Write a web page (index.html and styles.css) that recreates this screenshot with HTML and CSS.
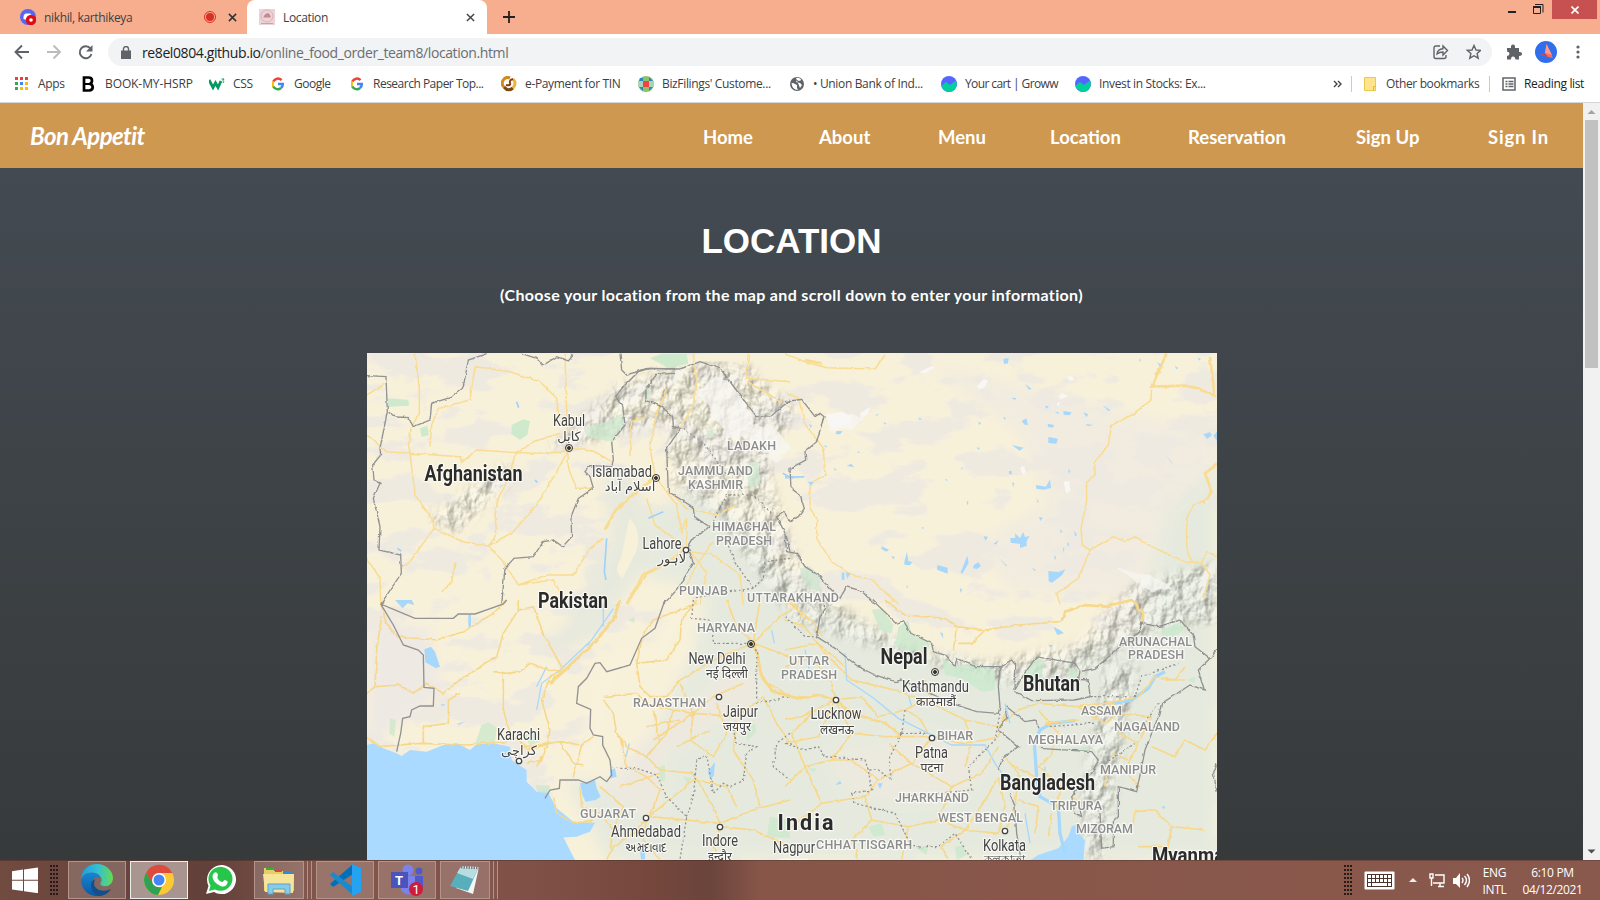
FILE: index.html
```html
<!DOCTYPE html>
<html lang="en">
<head>
<meta charset="utf-8">
<title>Location</title>
<link rel="stylesheet" href="styles.css">
</head>
<body>
<div class="screen">
  <header class="tabs">
    <div class="tab idle">
      <svg class="i16" viewBox="0 0 16 16"><circle cx="8" cy="8" r="8" fill="#5865f2"/><path d="M3.5 10Q3 5 6 4.500h4q2 1 2.500 4l-4 3z" fill="#fff"/><circle cx="11" cy="11" r="5.200" fill="#e00b13"/><circle cx="11" cy="11" r="1.800" fill="#fff"/></svg>
      <span class="tab-title t-one">nikhil, karthikeya</span>
      <svg class="rec" viewBox="0 0 12 12"><circle cx="6" cy="6" r="5.500" fill="none" stroke="#d93025"/><circle cx="6" cy="6" r="4" fill="#d93025"/></svg>
      <svg class="x" viewBox="0 0 10 10"><path d="M1 1l8 8M9 1L1 9" stroke="#333" stroke-width="1.700"/></svg>
    </div>
    <div class="tab active">
      <svg class="i16" viewBox="0 0 16 16"><path fill="#ecd3d6" d="M0 0h16v16H0z"/><circle cx="8" cy="7" r="6" fill="none" stroke="#dcb3b8"/><path d="M4.500 8.500q0-3 4.500-4.500 3 2 2.500 4.500z" fill="#c58a91"/><path d="M2 14.500h12" stroke="#cfa0a6"/></svg>
      <span class="tab-title t-two">Location</span>
      <svg class="x" viewBox="0 0 10 10"><path d="M1 1l8 8M9 1L1 9" stroke="#444" stroke-width="1.600"/></svg>
    </div>
    <svg class="plus" viewBox="0 0 12 12"><path d="M6 0v12M0 6h12" stroke="#222" stroke-width="1.800"/></svg>
    <div class="window">
      <svg viewBox="0 0 36 14"><path d="M0 11h8v2H0z" fill="#222"/><path d="M25.500 6.500h7v7h-7zM27 4.500h8v8" fill="none" stroke="#222"/><path d="M25 6h8v2h-8z" fill="#222"/></svg>
      <div class="close"><svg viewBox="0 0 8 8"><path d="M.5.5l7 7M7.500.5l-7 7" stroke="#fff" stroke-width="1.600"/></svg></div>
    </div>
  </header>
  <div class="toolbar">
    <svg class="arrows" viewBox="0 0 80 16"><g fill="none" stroke-width="1.900"><path d="M15 8H2M8 1.500L1.500 8 8 14.500" stroke="#5f6368"/><path d="M33 8h13M39.500 1.500L46 8l-6.500 6.500" stroke="#bbb"/><path d="M76.500 4.500A6 6 0 1 0 77.500 10" stroke="#5f6368"/></g><path d="M78.500 1v6.500H72z" fill="#5f6368"/></svg>
    <div class="omnibox">
      <svg class="lock" viewBox="0 0 10 13"><path d="M0 4.500h10V13H0z" fill="#5f6368"/><path d="M2.500 5V3a2.500 2.500 0 0 1 5 0v2" fill="none" stroke="#5f6368" stroke-width="1.400"/></svg>
      <span class="url"><b>re8el0804.github.io</b>/online_food_order_team8/location.html</span>
      <svg class="share" viewBox="0 0 48 16"><g fill="none" stroke="#5f6368" stroke-width="1.400"><path d="M7 2H3Q1 2 1 4v8.500q0 2 2 2h8q2 0 2-2V11M4 10q.5-5 6-5.300V2l4.500 4.500L10 11V8Q6.500 8 4 10z"/><path d="M41 1.500l2 4.500 4.700.4-3.600 3.100 1.100 4.700L41 11.700l-4.200 2.500 1.100-4.700-3.600-3.100L39 6z"/></g></svg>
    </div>
    <svg class="puzzle" viewBox="0 0 16 16"><path d="M1 4h4Q4.500.5 7 .5T9 4h4v4q3-.5 3 1.700T13 12v3.500H9.500Q9 12.500 7 12.500T5 15.500H1V12q2.500-.5 2.500-2.300T1 7.500z" fill="#5f6368"/></svg>
    <svg class="avatar" viewBox="0 0 22 22"><circle cx="11" cy="11" r="11" fill="#2f6fed"/><path d="M11.500 3L18 17l-5-1-8-3 5-1z" fill="#ff6b5e"/><path d="M11.500 3L10 12l7 2z" fill="#ff9a8d"/><path d="M4 12l6 .5 3 3.500z" fill="#b53a55"/></svg>
    <svg class="dots" viewBox="0 0 4 14"><g fill="#5f6368"><circle cx="2" cy="2" r="1.600"/><circle cx="2" cy="7" r="1.600"/><circle cx="2" cy="12" r="1.600"/></g></svg>
  </div>
  <div class="bookmarks">
    <div class="bm"><svg viewBox="0 0 16 16"><path fill="#ea4335" d="M1 1h3v3H1zM6 1h3v3H6zM11 1h3v3h-3z"/><path fill="#34a853" d="M1 6h3v3H1zM1 11h3v3H1z"/><path fill="#4285f4" d="M6 6h3v3H6z"/><path fill="#fbbc05" d="M11 6h3v3h-3zM6 11h3v3H6zM11 11h3v3h-3z"/></svg><span>Apps</span></div>
    <div class="bm"><svg viewBox="0 0 16 16"><path d="M3 1.500h4.500q3.500 0 3.500 3T8.500 8q3.200.3 3.200 3.300t-3.700 3.200H3z" fill="none" stroke="#000" stroke-width="2.700"/><path d="M3 8h6" stroke="#000" stroke-width="2"/></svg><span class="s-book">BOOK-MY-HSRP</span></div>
    <div class="bm"><svg viewBox="0 0 16 16"><path d="M0 4l4 7.500L6.500 7 9 11.500 12 5" fill="none" stroke="#059862" stroke-width="2.800"/><path d="M12.500 3H15l-1 1.500q1.500.5 0 2.500" fill="none" stroke="#059862"/></svg><span>CSS</span></div>
    <div class="bm g"><svg viewBox="2 0 16 16"><g fill="none" stroke-width="2.500"><path d="M11.500 4.200A5 5 0 0 0 3.300 5.500" stroke="#ea4335"/><path d="M3.300 5.500a5 5 0 0 0 0 5" stroke="#fbbc05"/><path d="M3.300 10.500a5 5 0 0 0 7.700 1.500" stroke="#34a853"/><path d="M11 12a5 5 0 0 0 1.800-4H8" stroke="#4285f4"/></g></svg><span>Google</span></div>
    <div class="bm g"><svg viewBox="2 0 16 16"><g fill="none" stroke-width="2.500"><path d="M11.500 4.200A5 5 0 0 0 3.300 5.500" stroke="#ea4335"/><path d="M3.300 5.500a5 5 0 0 0 0 5" stroke="#fbbc05"/><path d="M3.300 10.500a5 5 0 0 0 7.700 1.500" stroke="#34a853"/><path d="M11 12a5 5 0 0 0 1.800-4H8" stroke="#4285f4"/></g></svg><span>Research Paper Top...</span></div>
    <div class="bm"><svg viewBox="0 0 16 16"><g fill="none" stroke-width="3"><path d="M9 2A5.500 5.500 0 0 0 3 11" stroke="#d08a1e"/><path d="M3 11q4 5 9 1" stroke="#7a4a12"/><path d="M12 12q4-5 0-9" stroke="#e8b73c"/><path d="M12 3Q8 4 9 7T5 9" stroke="#8a3d14" stroke-width="2"/></g></svg><span>e-Payment for TIN</span></div>
    <div class="bm"><svg viewBox="0 0 16 16"><circle cx="8" cy="8" r="8" fill="#8dc26b"/><path d="M0 5h5v6H0zM11 5h5v6h-5z" fill="#a6d5b8"/><path d="M2 2h3v3H1zM11 1l4 4h-4zM11 11h4l-4 4zM1 11h4v4z" fill="#2c85c4"/><path d="M5 5h6v6H5z" fill="#ee4444"/></svg><span>BizFilings' Custome...</span></div>
    <div class="bm"><svg viewBox="-1 0 16 16"><circle cx="7" cy="8" r="7" fill="#5f6368"/><path d="M1.500 7q3 0 3.500 1l2 1v3l1 2q-6 0-6.500-7zM6 2q3-1 5.500 2L9 5 7 4 6 6l4 1 2 2-2 3" fill="#fff"/></svg><span>• Union Bank of Ind...</span></div>
    <div class="bm cart"><svg viewBox="0 0 16 16"><circle cx="8" cy="8" r="8" fill="#5367ff"/><path d="M.3 10L5 6l4 3 6-4.500Q17.500 12 11 15.500 3 17 .3 10z" fill="#00d09c"/></svg><span>Your cart | Groww</span></div>
    <div class="bm"><svg viewBox="0 0 16 16"><circle cx="8" cy="8" r="8" fill="#5367ff"/><path d="M.3 10L5 6l4 3 6-4.500Q17.500 12 11 15.500 3 17 .3 10z" fill="#00d09c"/></svg><span>Invest in Stocks: Ex...</span></div>
    <svg class="more" viewBox="0 0 9 8"><path d="M1 1l3 3-3 3M5 1l3 3-3 3" fill="none" stroke="#444" stroke-width="1.400"/></svg>
    <div class="bm split"><svg viewBox="0 0 16 16"><path d="M.5 1.500h11v13H.5z" fill="#ffe38f" stroke="#ecc94b"/><path d="M9.500 14v-3.500h2" fill="none" stroke="#e0b72e"/></svg><span>Other bookmarks</span></div>
    <div class="bm split"><svg viewBox="0 0 16 16"><path d="M1 2h12v12H1z" fill="none" stroke="#5f6368" stroke-width="1.500"/><path d="M3.500 5.500h2m1 0h5M3.500 8h2m1 0h5M3.500 10.500h2m1 0h5" stroke="#5f6368" stroke-width="1.500"/></svg><span class="dark">Reading list</span></div>
  </div>

  <div class="viewport">
    <main class="page">
      <nav class="nav">
        <a class="brand">Bon Appetit</a>
        <a>Home</a><a>About</a><a>Menu</a><a>Location</a><a>Reservation</a><a>Sign Up</a><a class="last">Sign In</a>
      </nav>
      <h1>LOCATION</h1>
      <p class="hint">(Choose your location from the map and scroll down to enter your information)</p>
      <svg class="map" viewBox="0 0 850 507">
        <defs>
          <filter id="patch" x="0" y="0" width="1" height="1" color-interpolation-filters="sRGB"><feTurbulence type="fractalNoise" baseFrequency=".016 .032" numOctaves="5" seed="8"/><feColorMatrix values="0 0 0 0 .933 0 0 0 0 .914 0 0 0 0 .886 12 0 0 0 -6.100"/></filter>
          <filter id="relief" x="0" y="0" width="1" height="1" color-interpolation-filters="sRGB"><feTurbulence type="fractalNoise" baseFrequency=".07 .05" numOctaves="4" seed="3" result="n"/><feDiffuseLighting in="n" surfaceScale="6" lighting-color="#fff" result="l"><feDistantLight azimuth="225" elevation="52"/></feDiffuseLighting><feColorMatrix in="l" values="1 0 0 0 .06 0 1 0 0 .06 0 0 1 0 .03 0 0 0 1 0" result="c"/><feGaussianBlur in="SourceGraphic" stdDeviation="5" result="m"/><feComposite in="c" in2="m" operator="in"/></filter>
          <filter id="jag" color-interpolation-filters="sRGB"><feTurbulence type="fractalNoise" baseFrequency=".05" numOctaves="3" seed="2"/><feDisplacementMap in="SourceGraphic" scale="9" xChannelSelector="R" yChannelSelector="G"/></filter>
          <filter id="soft"><feGaussianBlur stdDeviation="7"/></filter>
        </defs>
        <path fill="#f8f1da" d="M0 0h850v507H0z"/>
        <path filter="url(#patch)" opacity=".85" d="M0 0h850v507H0z"/>
        <g filter="url(#soft)">
          <path d="M560 10L760 60 850 80V260L640 235 610 190 680 150 650 80z" fill="#eee9e1" opacity=".7"/>
          <path d="M225 210L300 150 330 130 400 200 440 245 560 300 660 320 770 270 800 160 850 110V507H240L200 430 250 400 330 300 310 230z" fill="#e6eade"/>
          <path d="M170 300L220 290 290 200 270 120 235 120 245 190 200 270z" fill="#e7e9dd"/>
          <path d="M0 270L60 275 75 340 0 395z" fill="#eee9e3"/>
          <path d="M220 350L300 370 370 310 400 340 300 400 290 470 240 440z" fill="#eee9df"/>
          <path d="M560 380L620 400 600 440 540 450 480 440 460 400z" fill="#eeeae0" opacity=".7"/>
          <path d="M235 300L280 300 310 230 340 250 320 310 290 370 240 430 205 425z" fill="#f8f1da"/>
        </g>
        <g filter="url(#relief)" opacity=".42">
          <path d="M180 95L255 30 330 8 380 12 430 60 400 100 410 150 440 230 500 270 560 300 620 310 710 290 770 230 850 210V270L790 275 720 320 640 330 530 300 430 270 390 220 350 160 305 130 300 70 240 85z"/>
          <path d="M740 310L715 440 720 507 735 507 770 310zM60 165L140 110 150 120 90 180z"/>
        </g>
        <g fill="#f7f6f2" opacity=".75" filter="url(#jag)"><path d="M330 40l20-18 25 20 10 30 25 5 15 20-20 8-30-25-15 5zM460 60l35 4-8 12-25 2zM385 100l30 4-4 8zM750 215l35 8 20 12-20 5z"/></g>

        <g transform="translate(-7 -8) scale(.33333)">
          <g fill="#cfe9cd"><path d="M80 160l65 4 2 18-62 3zM180 250l22-8 5 28-22 6zM455 240l35-17 20 5-8 42-22 14-26-16zM870 40l35-14h75l5 30-60 12z"/><path d="M680 245l60-15 45-25 10 35-40 50-75-15zM860 130l12-5-2 45-12-3zM1040 258l18-5 4 20-18 6zM1170 350l25 5 5 60-30 20-10-50z" opacity=".75"/></g>
          <g fill="none" stroke="#f9dc92" stroke-width="4.500" filter="url(#jag)">
            <path d="M165 26L178 130 178 205 155 245 145 300 150 325 300 335 305 352 350 315 450 322 530 325 600 322 628 310 700 318 755 350M150 325L165 450 215 520 222 550 310 590 385 603 410 570 405 510 415 460 445 400 465 330 520 290 600 265M210 305L215 240 235 190 330 165 345 65 450 80 540 110 590 160 598 220M222 550L150 650 122 672M385 603L460 560 530 480 590 380 628 310M385 603L430 650 475 720 560 690 640 690 690 610 730 580M20 150L78 115M20 270L80 320 150 325M615 26L625 370 650 430 700 430M285 655L275 710 245 740M475 720L580 705 620 778M20 640L60 700 62 778M890 400L830 440 770 490 735 550 770 490M860 460L885 540 940 580 975 615M890 400L950 480 965 560 980 520V610M975 615L860 690 810 760M885 390L870 310 890 200 920 130M810 330L815 230 860 215M1000 26L1010 100 1000 180 960 250M1165 26L1160 100 1290 110M1290 190L1230 150 1160 110M990 620L1060 630 1140 690 1150 778M990 620L1040 680 1020 778M1060 590L1010 660 980 720M940 450L980 490 1070 510 1130 480"/>
            <path d="M885 395L770 490 735 555M975 615L930 650 850 690 800 778" stroke-width="9"/>
          </g>
          <g fill="none" stroke="#9fd2f8" stroke-width="5"><path d="M740 580L733 680 738 705M910 500l-45 20M470 170l6 18M525 405l7 7M1268 385l22 12M112 610l12 8"/></g>
          <path d="M808 520q40 40 20 100l-40 80q-30-20-5-60z" fill="#f8f1da"/>
          <g fill="none" stroke="#929292" stroke-width="4" filter="url(#jag)">
            <path d="M20 92L78 95 82 200 60 310 62 330 38 360 42 405 60 415 40 460 60 545 57 615 122 630 124 685 62 778M86 202L108 216 145 218 160 245 210 225 215 175 270 158 310 125 325 45 380 26M485 26L530 40 548 62 590 35 625 48 640 30M945 72L870 70 835 80 790 125 766 155 788 180 795 240 755 290 760 345 755 365 690 362 675 380 690 395 700 430 655 460 633 515 635 575 608 605 580 585 550 590 520 635 462 640 435 670 425 778"/>
            <path d="M945 85L890 88 858 130 858 165 905 185 938 215 940 245 962 250 920 310 925 440 1000 487 1003 515 1048 545 1000 580 985 605 1000 655 950 735 910 778M780 26L785 75 800 90 860 70 960 72 1020 50 1080 70 1140 150 1190 215 1235 212 1290 165M1275 500L1250 515 1278 570 1290 620"/>
            <path stroke-dasharray="6 7" d="M970 250L1035 300 1065 340 1100 390M1080 490L1100 450 1180 450 1240 510M1100 590L1130 660 1180 730 1210 700 1215 650 1290 640M1180 730L1110 740 1000 760M1080 490L1060 530"/>
          </g>
        </g>

        <g transform="translate(418 -8) scale(.33333)">
          <g fill="none" stroke="#f9dc92" stroke-width="4.500" filter="url(#jag)"><path d="M0 26L60 50 125 68 270 72 300 30M0 140L40 160 62 240 115 310 120 390 75 415 75 490 95 520 95 580 140 650 200 690 260 705 340 778M1145 26L1100 120 1098 165 1040 210 980 240 970 300 930 350 930 390 905 410 905 470 888 550 892 600 915 615 880 700 815 745 825 778M915 615L985 575 1020 590 1050 575 1100 605 1200 650 1250 655 1275 690 1255 760M1225 480L1205 520 1205 600 1220 655M1225 480L1260 465M1250 655L1265 620 1296 635"/><path d="M1145 26L1100 125 1200 122 1240 130 1296 158M1275 35L1290 158M1296 358L1260 385 1280 440 1255 475M60 45L110 55" stroke-width="8"/></g>
          <g fill="#a7d8fc"><path d="M655 42l16-3-2 16-12 2zM720 116l20 16-8 2zM678 158l16 1-4 6zM710 228l14-8 5 20-10-1zM788 236l20 4-5 8-14-2zM835 198l25 4-6 9-18-2zM895 202l15 6-6 9zM952 180l24 15-5 4zM902 238l23 1-16 5zM790 276l29 5-5 15-24-2zM680 300l36 8-12 9zM155 258l18 1-8 9-13-1zM185 362l14-6 8 11zM68 410l18 2-7 10zM753 420l30 5 12-22 3 26-22 5-22-3zM672 378h8v10h-8zM682 412l6 2-4 14zM545 468l6 2-4 12zM762 516l12 2-8 10zM1255 268l20-6 6 8-14 12zM1285 272l11-12v28zM690 565l15 14 10-18 5 15 14-3-9 15v15l-20 6v-12l-28-4-1-14h15zM595 574l14 1-7 12zM625 598l15-14-5 14zM290 604l22 10-8 6-15-8zM318 632l12 5-5 6zM358 650l8-30 4 28 13 3-9 10-16-2zM457 660l31 8v18l-32-12zM527 682l20-50 4 22-20 34zM566 660l14-8 8 11-12 9-12-2zM643 640l25 24-6-2zM790 678l30 3 21-8-10 18-30 22-10-4zM170 683l8-1 1 22h-9zM182 683l14 2-9 17zM524 728l8 6-5 10zM365 718v10h5zM847 590l6 8-5 8zM835 605l-2 20 5-12zM808 630l6 8-5 8zM868 557l8 12-6 6zM755 460l6 10-3 5zM72 236l9 6-4 8zM0 393l60 0-3 5-57 3zM115 302h10v6zM296 232l8 3-6 4zM580 230l9 4-7 6zM655 216l8 3-5 5zM780 182l12 2-8 7zM810 200l12 2-3 5zM575 307l10 2-5 5zM850 372l6 6-5 8zM1140 325l25 35-8-8zM1115 50l14 10-4 5zM1170 63l10 6-7 4zM1238 38l10 3-5 6zM1063 40l5 6-5 5zM740 668l14 7-6 2zM825 552l8 8-6 4zM400 218l10 3-5 5zM270 210l12-4-6 6zM145 368l10 6-5 3zM215 320l10 0-3 5zM410 545l8 4-6 3zM480 402l8 2-4 4zM530 366l4 5-5 3z"/></g>
          <g fill="#f8f7f5"><path d="M575 125l20-22 15 3-12 22-15 5zM400 82l40-18 10 3-30 18zM120 210l50-10 30 15-5 25-50 8zM225 205l30-18-8 22-18 9zM820 155l10-10 20 8-22 10zM845 95l15-2 8 12-14 3zM705 368l12-5 5 18-8 10zM835 410l18-2 3 30-12 8zM815 175l12-5-8 15z"/></g>
          <path d="M45 670l30-5 30 28-2 45-35-5-20-40z" fill="#cbe6cd" opacity=".7"/>
          <path d="M0 170L50 163 90 215 105 205 117 215 95 290 60 320 62 345 15 370 18 430 45 450 58 490 40 515 15 530 0 505M0 570L5 620 35 625 60 665 100 690 120 715 165 760 185 725 235 740 270 778" fill="none" stroke="#929292" stroke-width="4" filter="url(#jag)"/>
        </g>

        <g transform="translate(-7 247) scale(.33333)">
          <path d="M20 435L40 430 70 445 110 460 125 468 150 450 200 455 250 435 290 430 330 450 350 432 400 430 450 440 455 480 500 510 500 545 530 575 560 570 590 625 640 665 705 668 690 695 650 710 610 712 650 790H20z" fill="#aadaff"/>
          <g fill="#cfe9cd" opacity=".85"><path d="M365 375l20-8 25 15-5 45-60 5zM90 355l18 5-5 50-15-10zM527 555l45 2-10 22-30-3zM490 405l40-10 10 30-30 10zM900 500l15-5 0 45-18 10zM970 530l25 5-10 20zM1160 380l25-10 5 25-30 30zM1230 650l60 10v55l-70-5zM805 60l20-10-3 18z"/></g>
          <g fill="#a7d8fc"><path d="M193 148l20-8 12 15 15 45-12 5-32-18zM325 45h8v35h-8zM660 550l45-10 5 25 12 25-15 10-30 5-10-20zM750 510l15-5 5 25-18 5zM105 0l50 0 8 15-20-5-15 15zM1043 515l22-30-3 40-10 15zM670 140l22-18-5 14zM242 312l15 2-10 5zM290 372l28-8-20 10zM840 750l15-2v30h-12z"/></g>
          <g fill="none" stroke="#acd9f8" stroke-width="4"><path d="M760 26L695 120 600 210 545 250 530 330M730 10v70M808 430l-10 40M560 200l-30 60M1235 90l8 40"/></g>
          <g fill="none" stroke="#f7d88a" stroke-width="4.800" filter="url(#jag)"><path d="M62 12L80 70 110 110 230 120 310 95 400 40 440 0M65 50L50 150 45 260 20 280M45 260L120 255 160 280 200 250 250 280 300 240 410 170 430 100 475 30 475 0M400 215L440 220 480 215 510 190 550 205 610 215M430 215L430 330 450 400 500 440M475 30L520 20 550 100 610 210 570 230 545 300 570 390 562 440 530 500M20 410L60 440 180 430 320 435 440 425M190 430L190 380 265 370 265 300 300 280M500 440L600 425 665 435M600 425L640 490 670 495M500 440L440 460M500 490L545 480 560 440"/><path d="M730 300L760 340 770 400 800 440 860 470 900 510 1000 520M1010 0L965 60 960 120 920 180 830 190 850 100 880 60 1010 10M830 190L840 260 870 290 920 290 960 240 1080 170 1180 130M730 290L830 280 860 310 940 330 1000 340 1060 290 1150 250M940 330L920 400 860 470M960 250L1000 340 990 420 1060 470 1100 400 1070 310M880 420L1000 340 1130 350 1210 290M780 410L800 500 860 530 900 570 870 650 1080 670 1180 630 1290 600M780 560L900 520M660 560L665 620 720 640 760 690 750 750M580 590L590 640 640 670 700 660"/><path d="M860 655L940 590 1000 540 1100 560 1130 620M860 655L820 700 760 740 740 778M860 655L850 720 900 778M1080 680L1060 740 1080 778M1080 680L1180 690 1290 740M1130 360L1120 450 1180 540 1200 620M1180 130L1210 240 1290 290M1180 130L1130 80 1100 0M1180 130L1260 50 1290 30M1180 130L1290 170M1200 0L1180 130M1210 290L1250 370 1290 430M1000 520L1060 620 1080 670M860 380L960 360M900 430L880 330M950 440L1050 390M720 560L790 620 760 690M700 410L665 435 640 530"/><path d="M780 0L760 60 700 130 610 215 570 250M1185 130L1205 230 1240 275 1290 288M500 450L560 430" stroke-width="9"/></g>
          <g fill="none" stroke="#929292" stroke-width="4"><path d="M62 12L100 75 130 135 175 150 190 165 192 262 222 265 220 318 180 318 155 330 150 350 128 355 122 400 110 455M62 12L165 55 280 55 295 42 345 42 430 12 440 0M915 0L885 85 845 115 810 195 740 215 720 188 705 190 680 235 655 260 650 310 692 328 690 385 700 405 728 410 728 435 750 480 755 525 740 545 720 530 680 550 655 540 600 540 598 565 570 570 555 595"/><path stroke-dasharray="6 7" d="M755 505L830 505 890 525 920 590 980 650 960 778M980 650L1000 590 1010 480 1040 465 1060 580 1090 550 1110 560 1150 540 1160 460 1190 440 1130 430 1120 390M1060 80V130L1170 130 1190 150 1190 300M1290 400L1250 430 1240 500 1290 540M1000 0L995 55 1050 60M1190 310L1290 290" filter="url(#jag)"/></g>
        </g>

        <g transform="translate(418 247) scale(.33333)">
          <g fill="#cbe8cd" opacity=".8"><path d="M260 30l30-5 35 50-5 25-35-10zM340 80l30-18 10 40 60 30-15 15-60 10-35-20zM470 170l40 30 50-10 70 20v60l-40 5-60-40-50-10zM715 215l40-40 25 5-10 50-30 25zM850 200l30 15-5 25-20-5zM1130 90l55-25 12 25-30 20-30 5zM1205 240l25-10 0 20zM855 445l60-5-10 15zM510 740l25-5 10 30-30 15zM395 745l35-10-5 30zM250 680l40-10 10 35-35 5zM65 505l30 0-8 12z"/></g>
          <path d="M720 790L760 765 820 745 850 710 860 680 875 672 885 705 900 720 895 790z" fill="#aadaff"/>
          <g fill="none" stroke="#a7d8fc"><path d="M1140 215L1110 230 1090 265 1040 300 980 312M870 362L800 370 765 390 748 430 755 530 765 590 820 620 825 700 840 760" stroke-width="10"/><path d="M180 160L185 240 260 290 340 355 420 395 500 435 600 435 630 490 680 560M370 285L380 320M60 150L75 220M660 310L675 370M720 640L735 730M780 560v-60" stroke-width="4"/></g>
          <g fill="#a7d8fc"><path d="M150 555l15-12 5 8zM278 550l15 0-8 18zM805 80l20 10 12 10-20 5zM465 98h8l2 18zM790 135l15 0-8 8zM1130 620l12-2-6 10z"/></g>
          <g fill="none" stroke="#f7d88a" stroke-width="4.800" filter="url(#jag)"><path d="M300 0L360 45 480 55 515 80 600 90 700 75 830 65M515 80L505 150M600 90L560 130 520 130M0 60L60 80 120 160 200 240 330 270 440 310 540 360 640 380M20 0L60 60M0 200L80 170 140 250 150 300 50 350 0 360M150 300L100 410 0 430M150 300L230 290 280 350 360 330 440 290M150 300L200 400 300 410 350 410 440 410 530 430 600 420 640 410M0 150L100 130 180 200M80 340L20 400 60 500 0 560M60 500L140 480 200 400M60 500L110 610 20 680M110 610L240 590 280 540 380 490 440 410M280 540L200 480 140 480M240 590L260 660 370 680 460 660 500 560 590 520 640 440M370 680L350 778M260 660L200 720 220 778"/><path d="M460 660L540 690 600 600 640 530M500 560L380 490 310 430M540 690L640 700 660 620 640 530M540 690L470 740 490 778M660 700L690 620 700 520 660 470M640 380L700 330 760 310 880 320 960 310 1060 290 1110 230M640 410L660 340M760 330L820 400 800 460 760 500 830 560 810 630M880 320L960 370 1000 340 1100 350M880 360L780 370M690 500L750 530M700 600L760 620 750 700M800 640L790 710M860 590L900 620M1000 400L1060 430 1020 510 1060 560M1060 430L1100 350M960 560L970 500M980 460L1030 480M1050 635L1110 630 1160 680 1150 740 1060 740M1100 440L1170 470 1200 420 1260 450 1296 400M1140 778L1160 680 1260 690M0 0L80 60 110 110M440 310L420 240M540 360L560 430 540 500M360 330L400 350 430 400M1110 230L1170 240 1200 200M930 340L990 310M1200 240L1140 240M1040 700L1050 635"/><path d="M830 65L840 35 900 15 960 20 1040 0 1075 40 1070 70M0 285L40 295 100 285 150 300 200 340 300 370 350 410" stroke-width="8"/></g>
          <g fill="none" stroke="#929292" stroke-width="4" filter="url(#jag)"><path d="M262 0L335 70 355 62 378 100 440 130 445 155 480 165 510 200 515 175 570 200 645 200 680 180 692 195 690 270 715 225 755 170 870 190 885 215 880 238 910 240 915 290 870 300 740 302 690 275M118 0L118 25 105 50 95 110 150 145 220 200 270 225 330 245 350 240 500 310 575 335 640 340 645 320 640 260 645 200M885 215L930 205 960 180 1000 145 1060 100 1070 70 1120 80 1185 60 1225 105 1230 140 1275 175 1296 150M1275 175L1240 210 1258 270 1215 255 1130 310 1120 350 1080 450 1055 575 1000 560 1000 650 985 665 985 740 950 745 945 640M660 325L665 350 640 390 700 440 655 470 640 510M665 320L720 365 750 360 762 385M762 445L920 455 940 480 920 520 860 590 870 640 890 650 885 630M675 580L690 620 695 700 710 790M1296 490L1285 520 1296 575"/>
          <path stroke-dasharray="6 7" d="M0 50L60 110 95 110M645 340L630 420 550 500 560 570 350 590M350 400L310 480 320 540 280 510 250 510 260 570 200 580 210 610 330 640 380 740 460 740 510 700 560 778M350 400L430 400M350 400L360 330M0 430L60 450 100 440 120 470 240 480 250 510M915 290L1050 290 1070 230 1180 190M930 370L790 380M1060 400L1120 310M960 490L1050 430"/></g>
        </g>

        <g class="map-labels">
          <g class="country"><text x="57.500" y="127.500" textLength="98">Afghanistan</text><text x="171" y="254.500" textLength="70">Pakistan</text><text x="513.500" y="310.500" textLength="47">Nepal</text><text x="656" y="337.500" textLength="57">Bhutan</text><text x="633" y="436.500" textLength="95">Bangladesh</text><text x="410.500" y="476.500" textLength="56">India</text><text x="785" y="510" textLength="79">Myanmar</text></g>
          <g class="city"><text x="186" y="72.500" textLength="32">Kabul</text><text x="225" y="123.500" textLength="60">Islamabad</text><text x="275.500" y="195.500" textLength="39">Lahore</text><text x="321.500" y="310.500" textLength="57">New Delhi</text><text x="356" y="363.500" textLength="35">Jaipur</text><text x="443.500" y="366" textLength="51">Lucknow</text><text x="535" y="338.500" textLength="67">Kathmandu</text><text x="548" y="404.500" textLength="33">Patna</text><text x="130" y="386.500" textLength="43">Karachi</text><text x="244" y="484" textLength="70">Ahmedabad</text><text x="335" y="493" textLength="36">Indore</text><text x="406" y="500" textLength="42">Nagpur</text><text x="616" y="497.500" textLength="43">Kolkata</text></g>
          <g class="local"><text x="202" y="88">کابل</text><text x="263" y="138">اسلام آباد</text><text x="305" y="210">لاہور</text><text x="152" y="402">کراچی</text><text x="360" y="325" textLength="42">नई दिल्ली</text><text x="370" y="378" textLength="28">जयपुर</text><text x="470" y="381" textLength="34">लखनऊ</text><text x="569" y="353" textLength="40">काठमाडौं</text><text x="565" y="419" textLength="23">पटना</text><text x="279" y="499" textLength="42">અમદાવાદ</text><text x="353" y="508" textLength="24">इन्दौर</text><text x="427" y="515" textLength="27">नागपुर</text><text x="638" y="511" textLength="42">কলকাতা</text></g>
          <g class="state"><text x="360" y="97" textLength="49">LADAKH</text><text x="311" y="122" textLength="75">JAMMU AND</text><text x="321" y="136" textLength="55">KASHMIR</text><text x="345" y="178" textLength="64">HIMACHAL</text><text x="349" y="191.500" textLength="56">PRADESH</text><text x="312" y="241.500" textLength="49">PUNJAB</text><text x="380" y="249" textLength="92">UTTARAKHAND</text><text x="330" y="278.500" textLength="58">HARYANA</text><text x="266" y="353.500" textLength="73">RAJASTHAN</text><text x="213" y="465" textLength="56">GUJARAT</text><text x="422" y="312" textLength="40">UTTAR</text><text x="414" y="326" textLength="56">PRADESH</text><text x="752" y="292.500" textLength="73">ARUNACHAL</text><text x="761" y="306" textLength="56">PRADESH</text><text x="714" y="362" textLength="41">ASSAM</text><text x="747" y="378" textLength="66">NAGALAND</text><text x="661" y="390.500" textLength="75">MEGHALAYA</text><text x="570" y="387" textLength="36">BIHAR</text><text x="733" y="421" textLength="56">MANIPUR</text><text x="528" y="448.500" textLength="74">JHARKHAND</text><text x="683" y="457" textLength="52">TRIPURA</text><text x="571" y="469" textLength="85">WEST BENGAL</text><text x="709" y="480" textLength="57">MIZORAM</text><text x="449" y="495.500" textLength="96">CHHATTISGARH</text></g>
          <g fill="#fff" stroke="#444" stroke-width="1.300"><circle cx="319" cy="197" r="2.700"/><circle cx="352" cy="344" r="2.700"/><circle cx="469" cy="347" r="2.700"/><circle cx="565" cy="385" r="2.700"/><circle cx="152" cy="408" r="2.700"/><circle cx="279" cy="465" r="2.700"/><circle cx="353" cy="474" r="2.700"/><circle cx="638" cy="478" r="2.700"/></g>
          <g fill="#333" stroke="#333"><circle cx="202" cy="95" r="1.500"/><circle cx="289" cy="125" r="1.500"/><circle cx="384" cy="291" r="1.500"/><circle cx="568" cy="319" r="1.500"/><g fill="none"><circle cx="202" cy="95" r="3.500"/><circle cx="289" cy="125" r="3.500"/><circle cx="384" cy="291" r="3.500"/><circle cx="568" cy="319" r="3.500"/></g></g>
        </g>
      </svg>
    </main>
    <div class="scroll"><svg viewBox="0 0 17 17"><path d="M4.500 11L8.500 7l4 4z" fill="#a3a3a3"/></svg><i class="thumb"></i><svg viewBox="0 0 17 17"><path d="M4.500 6.500h8L8.500 10.500z" fill="#505050"/></svg></div>
  </div>

  <footer class="taskbar">
    <svg class="start" viewBox="0 0 26 26"><path d="M0 4.200l11-1.600v10.200H0zM12 2.400L26 .4v12.400H12zM0 13.800h11V24L0 22.400zM12 13.800h14v12.400l-14-2z" fill="#fff"/></svg>
    <i class="grip"></i>
    <div class="task"><svg viewBox="0 0 32 32"><defs><linearGradient id="eg" x1="0" x2="1"><stop stop-color="#1b9de2"/><stop offset=".55" stop-color="#35c1d0"/><stop offset="1" stop-color="#65dc4c"/></linearGradient><linearGradient id="eb" x1="0" y1="0" x2="0" y2="1"><stop stop-color="#1786d2"/><stop offset="1" stop-color="#0c59a4"/></linearGradient></defs><path d="M0 16C0 6 7 0 16 0s16 7 16 14c0 6-5 9-10 8-3-1-3-2-2-4 2-3-1-9-8-9C6 8 1 11 0 16z" fill="url(#eg)"/><path d="M0 16Q3 8 12 8.500q6 1 7 5Q11 12 11 20q1 9 11 11-4 2-9 .8Q1 29 0 16z" fill="url(#eb)"/><path d="M14 15q-3 8 4 11 6 2 12-1-4 7-12 7Q10 29 10 21q0-4 4-6z" fill="#124f8c"/></svg></div>
    <div class="task current"><svg viewBox="0 0 32 32"><circle cx="16" cy="16" r="15" fill="#fbc934"/><path d="M3 8.500A15 15 0 0 1 29.500 9H16l-7 11z" fill="#dd4b3e"/><path d="M3 8.500L10 20q3 4 9 3l-4 8A15 15 0 0 1 3 8.500z" fill="#2fa254"/><circle cx="16" cy="16" r="7" fill="#fff"/><circle cx="16" cy="16" r="5.500" fill="#4586f5"/></svg></div>
    <div class="task bare"><svg viewBox="1 0 32 32"><path d="M2 30l2.500-8A14.500 14.500 0 1 1 10 28z" fill="#fff"/><path d="M5 27l1.500-5.500a12 12 0 1 1 4.500 4z" fill="#27c64b"/><path d="M10 9q3-2 4 2-1 2-.5 3 2 4 5 4l2-2q4 1 3 3-2 5-7 3-7-3-8-9 0-3 1.500-4z" fill="#fff"/></svg></div>
    <div class="task stack"><svg viewBox="0 0 32 32"><path d="M1 4h9l1 3h9l1 3h10v17H1z" fill="#e9ce65"/><path d="M3 4h7l1 2H3z" fill="#2bb33b"/><path d="M12 6h6l1 2h-7z" fill="#cf4e2b"/><path d="M20 8h8v2h-8z" fill="#2a8be0"/><path d="M0 10h31l-1 19-28-1z" fill="#f6e49a"/><path d="M5 30V20h22v10h-5v-5H10v5z" fill="#87cbea" stroke="#5aa4c8"/></svg></div>
    <div class="task"><svg viewBox="0 0 32 32"><path d="M23 1L1 20l3 3 20-13z" fill="#0071b8"/><path d="M1 11l3-3 20 15v8z" fill="#1a8ad0"/><path d="M23 0l9 4v24l-9 4z" fill="#25a3f2"/></svg></div>
    <div class="task"><svg viewBox="0 0 32 32"><circle cx="17" cy="6" r="5.500" fill="#7b83eb"/><circle cx="28" cy="7" r="3.500" fill="#5059c9"/><path d="M23 12h9v12l-9 3z" fill="#5059c9"/><path d="M9 12h15v16q-8 6-14-2z" fill="#7b83eb"/><path d="M0 8h17v16H0z" fill="#4b53bc"/><text class="teams" x="4" y="21">T</text><circle cx="25" cy="25" r="7" fill="#ce1c3c"/><text class="count" x="21.500" y="30">1</text></svg></div>
    <div class="task stack"><svg viewBox="0 0 32 32"><path d="M12 2l18 1-6 27-17-6z" fill="#f3f6f4"/><path d="M11 4L29 5 19 27 1 22z" fill="#59aebb"/><path d="M11 4L29 5 24 15 8 9z" fill="#b8dce0"/><path d="M12 3l18 1" stroke="#777" stroke-width="2.500" stroke-dasharray="1.500 1"/></svg></div>
    <i class="grip right"></i>
    <svg class="keyboard" viewBox="0 0 31 19"><rect x=".5" y=".5" width="30" height="18" rx="1" fill="#fff"/><path d="M3 3h25v13H3z" fill="#4b332e"/><path d="M4 4h3v3H4zM8 4h3v3H8zM12 4h3v3h-3zM16 4h3v3h-3zM20 4h3v3h-3zM24 4h3v3h-3zM4 8h3v3H4zM8 8h3v3H8zM12 8h3v3h-3zM16 8h3v3h-3zM20 8h3v3h-3zM24 8h3v3h-3zM4 12h3v3H4zM8 12h15v3H8zM24 12h3v3h-3z" fill="#fff"/></svg>
    <svg class="tray" viewBox="0 0 62 16"><path d="M1 10l4-4 4 4z" fill="#eee"/><g fill="none" stroke="#fff" stroke-width="1.400"><path d="M27 3h9v8h-11M30 14.500h6M32 11v3M22 2h3v4h-3zM23.500 6v8"/><path d="M54 6q2 2 0 5M56.500 4q4 4 0 9M59 2q5 6 0 13"/></g><path d="M45 6h3l4-5v15l-4-4h-3z" fill="#fff"/></svg>
    <div class="lang"><span>ENG</span><span>INTL</span></div>
    <div class="clock"><span>6:10 PM</span><span>04/12/2021</span></div>
  </footer>
</div>
<script src="labels.js"></script>
</body>
</html>
```
FILE: labels.js
```js
// Condense the city and country names to their label widths instead of tightening the gaps.
document.querySelectorAll(".country text, .city text, .local text").forEach(function (label) {
  if (label.textContent !== "India") label.setAttribute("lengthAdjust", "spacingAndGlyphs");
});
```
FILE: styles.css
```css
* { box-sizing: border-box; }
body { margin: 0; overflow: hidden; font-family: "Open Sans", "Noto Sans", sans-serif; font-size: 12px; color: #3c4043; }
svg { display: block; flex: none; }
.screen { width: 1600px; height: 900px; display: flex; flex-direction: column; }

.tabs { height: 34px; flex: none; background: #f7ae8e; display: flex; }
.tab { display: flex; align-items: center; height: 34px; }
.idle { width: 247px; padding-left: 20px; }
.active { width: 240px; padding-left: 12px; background: #fff; border-radius: 8px 8px 0 0; }
.i16 { width: 16px; height: 16px; margin-right: 8px; }
.tab-title { white-space: nowrap; letter-spacing: -.35px; }
.t-one { width: 160px; }
.t-two { width: 183px; }
.rec { width: 12px; height: 12px; margin-right: 12px; }
.x { width: 9px; height: 9px; }
.plus { width: 12px; height: 12px; margin: 11px 0 0 16px; }
.window { margin-left: auto; display: flex; }
.window > svg { width: 36px; height: 14px; margin-right: 8px; }
.close { width: 45px; height: 19px; margin-right: 3px; background: #c75050; display: flex; align-items: center; justify-content: center; }
.close svg { width: 8px; height: 8px; }

.toolbar { height: 36px; flex: none; background: #fff; display: flex; align-items: center; padding-left: 14px; }
.arrows { width: 80px; height: 16px; }
.omnibox { width: 1384px; height: 28px; margin-left: 14px; padding-left: 13px; border-radius: 14px; background: #f1f3f4; display: flex; align-items: center; }
.lock { width: 10px; height: 13px; }
.url { margin-left: 11px; width: 1291px; font-size: 14px; letter-spacing: -.4px; color: #6a6e73; }
.url b { font-weight: 400; color: #202124; }
.share { width: 48px; height: 16px; }
.puzzle { width: 16px; height: 16px; margin-left: 14px; }
.avatar { width: 22px; height: 22px; margin-left: 13px; }
.dots { width: 4px; height: 14px; margin-left: 19px; }

.bookmarks { height: 33px; flex: none; padding: 0 0 5px 14px; background: #fff; border-bottom: 1px solid #d5d8da; display: grid; align-items: center; grid-template-columns: 67px 128px 63px 79px 150px 137px 151px 152px 134px 258px 18px 138px 111px; }
.bm { display: flex; align-items: center; white-space: nowrap; letter-spacing: -.35px; }
.bm > svg { width: 16px; height: 16px; margin-right: 8px; }
.g > svg { margin-right: 6px; }
.g { letter-spacing: -.5px; }
.cart { letter-spacing: -.6px; }
.s-book { letter-spacing: -.1px; }
.more { width: 9px; height: 8px; }
.split { border-left: 1px solid #ccc; height: 16px; padding-left: 12px; }
.split > svg { margin-right: 6px; }
.dark { color: #202124; }

.viewport { height: 757px; flex: none; display: flex; overflow: hidden; }
.page { width: 1583px; height: 757px; overflow: hidden; background: linear-gradient(#434a51 65px, #373a3b); color: #fff; font-family: Lato, sans-serif; }
.nav { height: 65px; background: #ce9850; display: grid; align-items: center; grid-template-columns: 673px 116px 119px 112px 138px 168px 132px 95px; padding-left: 30px; font-size: 18.500px; font-weight: 700; }
.nav a { white-space: nowrap; padding-top: 2px; }
.nav .last { letter-spacing: .8px; }
.nav .brand { font-size: 24px; font-style: italic; letter-spacing: -.6px; padding: 0; }
h1 { margin: 53px 0 0; font: 700 35px/40px "Liberation Sans", sans-serif; text-align: center; }
.hint { margin: 22px 0 0; font-size: 16px; line-height: 24px; font-weight: 700; text-align: center; letter-spacing: .34px; }
.map { width: 850px; height: 507px; margin: 46px 0 0 367px; }
.map-labels { font-family: Roboto, sans-serif; }
.map-labels text { stroke: rgba(255, 255, 255, .7); stroke-width: 2.500px; stroke-linejoin: round; paint-order: stroke; }
.country { font-size: 21.500px; font-weight: 700; fill: #2b2b2b; }
.city { font-size: 16.500px; fill: #444; }
.local { font-family: "Noto Sans", "DejaVu Sans", sans-serif; font-size: 13px; fill: #444; text-anchor: middle; }
.state { font-size: 12.500px; font-weight: 500; fill: #8c8c8c; }

.scroll { width: 17px; background: #f1f1f1; display: flex; flex-direction: column; }
.scroll svg { width: 17px; height: 17px; }
.thumb { width: 13px; height: 248px; margin: 0 2px auto; background: #c1c1c1; }

.taskbar { height: 40px; flex: none; display: flex; align-items: center; padding-left: 12px; background: linear-gradient(#0003 0 1px, #0000 1px), linear-gradient(90deg, #714a40 0, #62413a 210px, #83564b 320px, #805147 530px, #77483d 640px, #6b443c 710px, #875649 760px, #8a594d); }
.start { width: 26px; height: 26px; }
.grip { width: 9px; height: 31px; margin: 0 9px 0 12px; background: radial-gradient(circle at 1px 1px, #28191a 1px, #0000 1.300px) 0 0 / 3px 4px; }
.task { width: 58px; height: 38px; margin-right: 4px; border: 1px solid #b4938b; background: #ffffff2e; display: flex; align-items: center; justify-content: center; }
.task svg { width: 32px; height: 32px; }
.current { background: #ffffff70; border-color: #eee; }
.bare { border-color: #0000; background: none; }
.stack { width: 50px; margin-right: 12px; box-shadow: 3px 0 0 #81574e, 4px 0 0 #b4938b, 7px 0 0 #81574e, 8px 0 0 #b4938b; }
.teams { font: 700 13px Roboto, sans-serif; fill: #fff; }
.count { font: 13px Roboto, sans-serif; fill: #fff; }
.right { margin: 0 11px 0 auto; }
.keyboard { width: 31px; height: 19px; }
.tray { width: 62px; height: 16px; margin: 0 11px 0 13px; }
.lang, .clock { display: flex; flex-direction: column; align-items: center; color: #fff; line-height: 17px; letter-spacing: -.35px; padding-top: 2px; }
.lang { width: 27px; }
.clock { width: 61px; margin: 0 17px 0 14px; }
```
